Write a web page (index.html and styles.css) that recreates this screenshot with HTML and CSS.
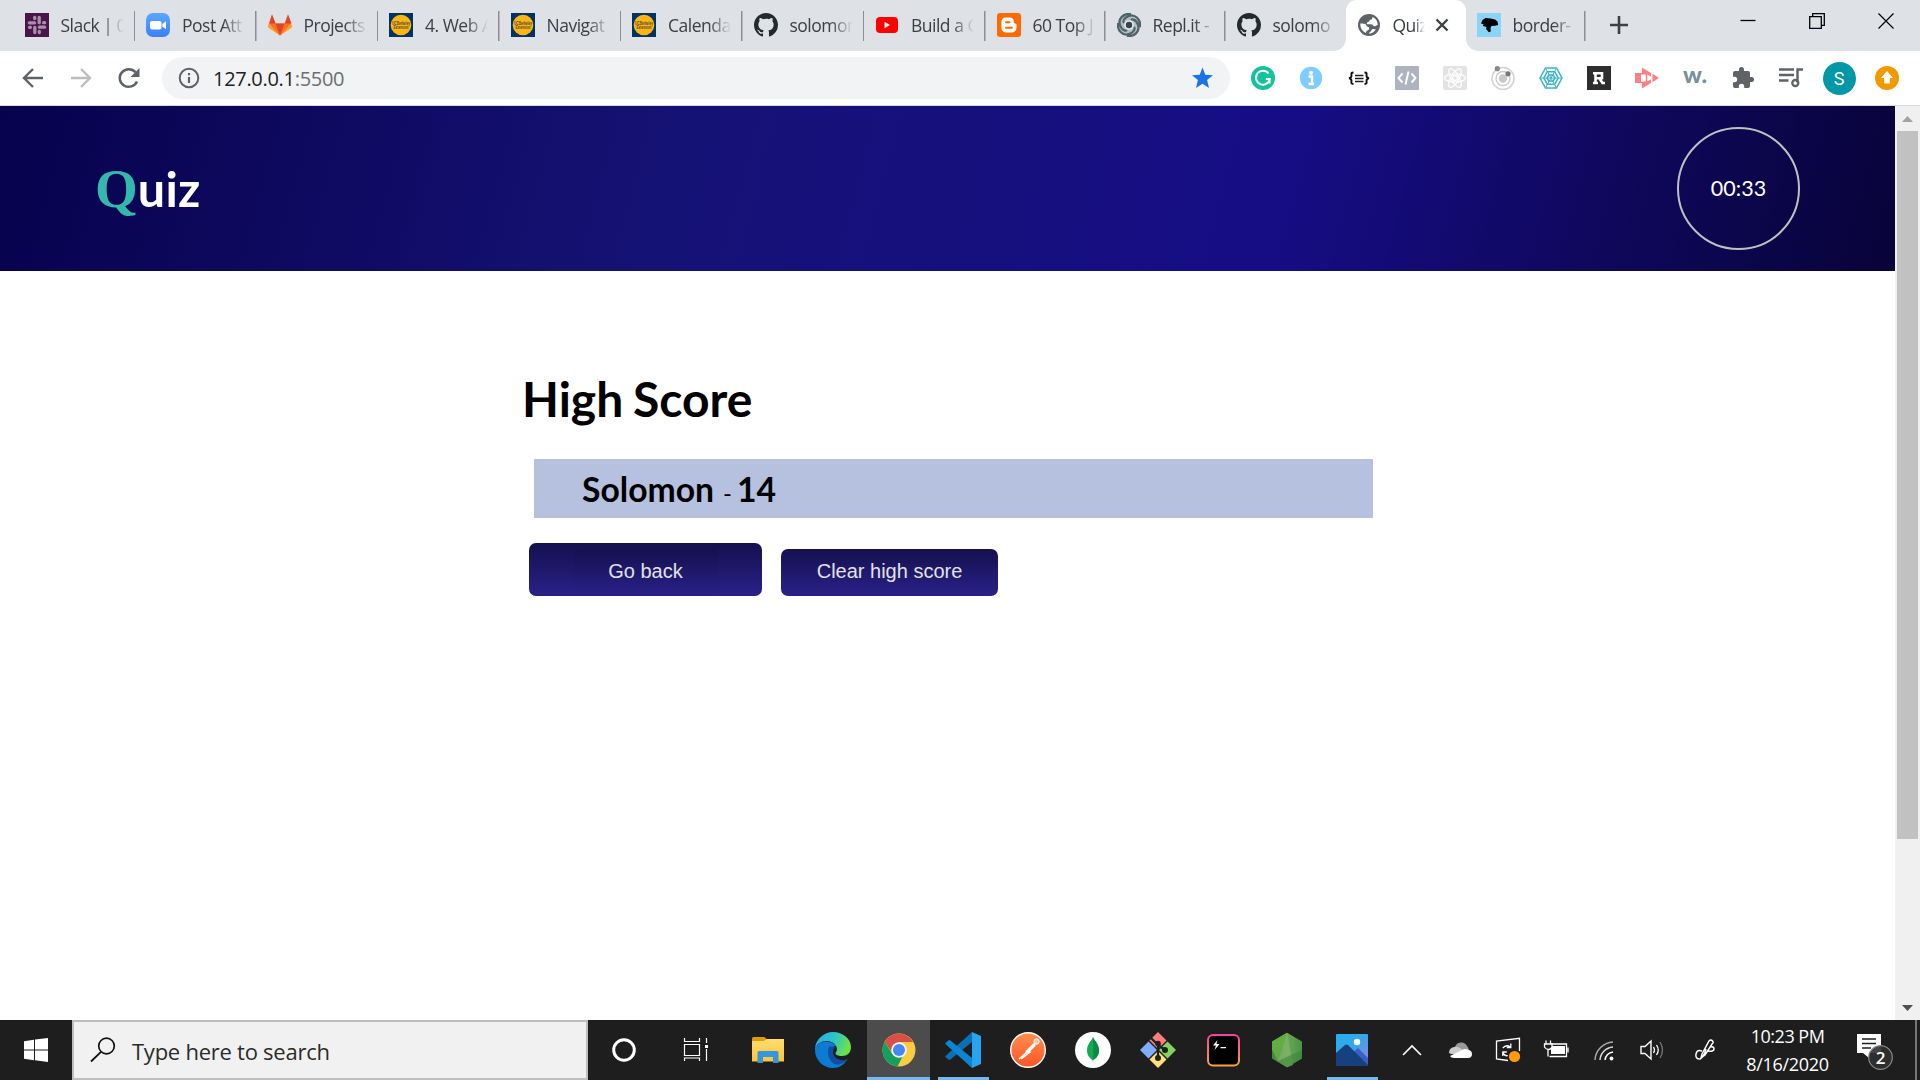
FILE: index.html
```html
<!DOCTYPE html>
<html lang="en">
<head>
<meta charset="utf-8">
<title>Quiz</title>
<link rel="stylesheet" href="styles.css">
</head>
<body>
<svg class="defs" width="0" height="0">
  <defs>
    <symbol id="github" viewBox="0 0 16 16"><path fill="#24292e" d="M8 0C3.58 0 0 3.58 0 8c0 3.54 2.29 6.53 5.47 7.59.4.07.55-.17.55-.38 0-.19-.01-.82-.01-1.49-2.01.37-2.53-.49-2.69-.94-.09-.23-.48-.94-.82-1.13-.28-.15-.68-.52-.01-.53.63-.01 1.08.58 1.23.82.72 1.21 1.87.87 2.33.66.07-.52.28-.87.51-1.07-1.78-.2-3.64-.89-3.64-3.95 0-.87.31-1.59.82-2.15-.08-.2-.36-1.02.08-2.12 0 0 .67-.21 2.2.82A7.6 7.6 0 0 1 8 3.87c.68 0 1.36.09 2 .27 1.53-1.04 2.2-.82 2.2-.82.44 1.1.16 1.92.08 2.12.51.56.82 1.27.82 2.15 0 3.07-1.87 3.75-3.65 3.95.29.25.54.73.54 1.48 0 1.07-.01 1.93-.01 2.2 0 .21.15.46.55.38A8.01 8.01 0 0 0 16 8c0-4.42-3.58-8-8-8z"/></symbol>
    <symbol id="berkeley" viewBox="0 0 24 24"><path fill="#003262" d="M0 0h24v24H0z"/><circle cx="12" cy="12" r="10.3" fill="#fdb515"/><text x="12" y="11.5" text-anchor="middle" font-family="Liberation Sans" font-weight="bold" font-size="4.6" textLength="18" lengthAdjust="spacingAndGlyphs" fill="#4b4a30">UCBerkeley</text><text x="12" y="16" text-anchor="middle" font-family="Liberation Sans" font-weight="bold" font-size="4.6" textLength="15" lengthAdjust="spacingAndGlyphs" fill="#4b4a30">Extension</text></symbol>
    <linearGradient id="gEdge" x1="0" y1="0" x2="1" y2="0.3"><stop offset="0" stop-color="#2aa9e8"/><stop offset=".55" stop-color="#2cc3c9"/><stop offset="1" stop-color="#6be04c"/></linearGradient>
    <linearGradient id="gPost" x1="0" y1="0" x2="0" y2="1"><stop offset="0" stop-color="#ff914d"/><stop offset="1" stop-color="#ff5325"/></linearGradient>
    <linearGradient id="gTerm" x1="0" y1="0" x2="0" y2="1"><stop offset="0" stop-color="#f540a4"/><stop offset="1" stop-color="#fba43a"/></linearGradient>
    <linearGradient id="gNode" x1="0" y1="0" x2="1" y2="0"><stop offset="0" stop-color="#3f873f"/><stop offset=".5" stop-color="#6aa858"/><stop offset="1" stop-color="#4b9345"/></linearGradient>
    <linearGradient id="gPhoto" x1="0" y1="0" x2="1" y2="1"><stop offset="0" stop-color="#25b0ee"/><stop offset=".5" stop-color="#38a5ea"/><stop offset="1" stop-color="#a57be0"/></linearGradient>
    <linearGradient id="gFold" x1="0" y1="0" x2="0" y2="1"><stop offset="0" stop-color="#ffdc73"/><stop offset="1" stop-color="#fbc636"/></linearGradient>
    <linearGradient id="gZoom" x1="0" y1="0" x2="0" y2="1"><stop offset="0" stop-color="#5aa7ff"/><stop offset="1" stop-color="#3a80fb"/></linearGradient>
  </defs>
</svg>

<div class="tabstrip">
  <div class="tab"><svg class="fav" viewBox="0 0 24 24"><path fill="#4a154b" d="M0 0h24v24H0z"/><g stroke="#a98eaa" stroke-width="3.300" stroke-linecap="round"><path d="M9.600 9.800H4.300M14.200 9.700V4.500M14.400 14.200h5.200M9.800 14.400v5.200M9.700 4.500v1M19.600 9.700h-1M14.300 19.500v-1M4.500 14.300h1"/></g></svg><span class="label">Slack | 0</span></div>
  <div class="tab"><svg class="fav" viewBox="0 0 24 24"><rect width="24" height="24" rx="7" fill="url(#gZoom)"/><rect x="4" y="8" width="11.5" height="8.6" rx="2" fill="#fff"/><path fill="#fff" d="M16.300 11l3.700-2.700v8L16.300 13.600z"/></svg><span class="label">Post Att</span></div>
  <div class="tab"><svg class="fav" viewBox="0 0 24 24"><path fill="#fc6d26" d="M0 14L4 1.500l3.500 9h9L20 1.500 24 14 12 22.500z"/><path fill="#e24329" d="M12 22.500L7.500 10.500h9zM4 1.500l3.500 9H1.200zM20 1.500l3.500 9h-6.500z"/><path fill="#fca326" d="M1.200 10.500L0 14l12 8.500zM22.800 10.500L24 14l-12 8.500z"/></svg><span class="label">Projects</span></div>
  <div class="tab"><svg class="fav"><use href="#berkeley"/></svg><span class="label">4. Web A</span></div>
  <div class="tab"><svg class="fav"><use href="#berkeley"/></svg><span class="label">Navigat</span></div>
  <div class="tab"><svg class="fav"><use href="#berkeley"/></svg><span class="label">Calenda</span></div>
  <div class="tab"><svg class="fav"><use href="#github"/></svg><span class="label">solomon</span></div>
  <div class="tab"><svg class="fav" viewBox="0 0 24 24"><rect x="1" y="4" width="22" height="16" rx="4" fill="#f00"/><path fill="#fff" d="M9.500 8.800v6.400L15 12z"/></svg><span class="label">Build a C</span></div>
  <div class="tab narrow"><svg class="fav" viewBox="0 0 24 24"><rect width="24" height="24" rx="3" fill="#ff6a00"/><path fill="#fff" d="M8.500 4.500h4c2.700 0 4.300 1.700 4.300 3.900 0 1.500.3 2 1.500 2.100 1 .1 1.200.5 1.200 1.200v3.100c0 2.600-1.800 4.600-4.400 4.600H8.800c-2.600 0-4.400-2-4.400-4.600V9c0-2.600 1.700-4.500 4.100-4.500z"/><path stroke="#ff6a00" stroke-width="1.900" stroke-linecap="round" d="M9 9.300h3.500M9 14.700h6"/></svg><span class="label">60 Top J</span></div>
  <div class="tab narrow"><svg class="fav" viewBox="0 0 24 24"><circle cx="12" cy="12" r="11.600" fill="#b5bfc3"/><g fill="none" stroke="#4f636a" stroke-width="2.200"><path d="M14 1C6 0 1 6 3 12s6 6 7 5M23 14c1-8-5-13-11-11s-6 6-5 7M10 23c8 1 13-5 11-11s-6-6-7-5M1 10c-1 8 5 13 11 11s6-6 5-7"/></g><circle cx="12" cy="12" r="4.800" fill="#e4e8ea"/><circle cx="12" cy="12" r="3.200" fill="#35434a"/></svg><span class="label">Repl.it -</span></div>
  <div class="tab narrow nosep"><svg class="fav"><use href="#github"/></svg><span class="label">solomo</span></div>
  <div class="tab narrow active"><svg class="globe" viewBox="0 0 22 22"><circle cx="11" cy="11" r="11" fill="#5f6368"/><path fill="#fff" d="M13.500 2.300C11 3 8.200 3.600 8.200 5.800c0 1.500 2.800.7 2.800 2.400 0 1.300-1.800 1.300-1.800 2.800h4.300c1.500 0 1.700 1.300 3 1.300 1 0 1.300-1.300 3-1.300C19.500 6.500 17 3.500 13.500 2.300z" opacity="0"/><path fill="#fff" d="M2.300 9.500c2.500 0 6.200.2 6.200 2.300 0 1.200 2.700.7 2.700 2.600 0 2.300-3.200 1.300-3.200 4.600C4.500 17.500 2 14 2.300 9.500zM14.500 3c3 1.200 5.200 4.200 5.200 8-1.500.2-1.700 1.300-3 1.300-1.700 0-1.500-2-3.700-2H9.800c-1.500 0-1.300-2 .2-2.300 2-.3 1-1.800 2.500-2.200s2-1.300 2-2.800zM11 19.700c0-2 2-1.500 2.500-3.500s3-.5 4.500-1.200c-1.300 2.700-3.800 4.700-7 4.700z"/></svg><span class="label">Quiz</span><svg class="close" viewBox="0 0 14 14"><path d="M1.500 1.500l11 11m0-11l-11 11" stroke="#3c4043" stroke-width="2.400"/></svg></div>
  <div class="tab narrow"><svg class="fav" viewBox="0 0 24 24"><path fill="#8ad4f5" d="M0 0h24v24H0z"/><path d="M4 10.500L5.500 7l3-2 5 .5 4.500 1 2.500 2 .7 3.500-3 .7-3.700.3-1 2 .3 3.500-2 .7-2.800-3.200.5-2L6 13l.5-1.800z"/></svg><span class="label">border-</span></div>
  <svg class="plus" viewBox="0 0 18 18"><path d="M9 0v18M0 9h18" stroke="#3c4043" stroke-width="2.600"/></svg>
  <div class="winctl">
    <svg width="16" height="16" viewBox="0 0 16 16"><path d="M.5 7.500h15" stroke="#000" stroke-width="1.300"/></svg>
    <svg width="16" height="16" viewBox="0 0 16 16"><path d="M.7 3.700h11.600v11.600H.7zM3.700 3.700V.7h11.600v11.600h-3" fill="none" stroke="#000" stroke-width="1.300"/></svg>
    <svg width="16" height="16" viewBox="0 0 16 16"><path d="M.5.5l15 15m0-15l-15 15" stroke="#000" stroke-width="1.200"/></svg>
  </div>
</div>

<div class="toolbar">
  <div class="nav">
    <svg viewBox="0 0 24 24"><path d="M22 12H3.500M12 3L3 12l9 9" fill="none" stroke="#5f6368" stroke-width="2.400"/></svg>
    <svg viewBox="0 0 24 24"><path d="M2 12h18.500M12 3l9 9-9 9" fill="none" stroke="#bbbdbf" stroke-width="2.400"/></svg>
    <svg viewBox="0 0 24 24"><path d="M20 15.500a9 8.800 0 1 1-1.500-9.300" fill="none" stroke="#5f6368" stroke-width="2.500"/><path d="M22.500 2v9h-9z" fill="#5f6368"/></svg>
  </div>
  <div class="omnibox">
    <svg class="info" viewBox="0 0 22 22"><circle cx="11" cy="11" r="9.300" fill="none" stroke="#5f6368" stroke-width="2"/><path d="M11 10v6M11 6v2.200" stroke="#5f6368" stroke-width="2.200"/></svg>
    <span class="url">127.0.0.1<span>:5500</span></span>
    <svg class="star" viewBox="0 0 22 22"><path fill="#1a73e8" d="M11 .5l2.800 7.200 7.700.5-5.900 4.900 1.900 7.900-6.500-4.200L4.500 21l1.900-7.900L.5 8.200l7.700-.5z"/></svg>
  </div>
  <div class="exts">
    <svg viewBox="0 0 24 24"><circle cx="12" cy="12" r="12" fill="#15c39a"/><path d="M17.500 7.500a7 7 0 1 0 1.300 5.500h-4M18.600 13v4.500" fill="none" stroke="#fff" stroke-width="2"/></svg>
    <svg viewBox="0 0 24 24"><circle cx="12" cy="12" r="11.200" fill="#7fcdff"/><circle cx="12" cy="6.800" r="2" fill="#fff"/><path d="M9.500 10.500h3.500V18M9.500 18h5.500" stroke="#fff" stroke-width="2.400" fill="none"/></svg>
    <svg viewBox="0 0 24 24"><path d="M6.500 6.500c-3 0-2 1.500-2 3s-.5 2.500-2.500 2.800c2 .3 2.500 1.300 2.500 2.700s-1 3 2 3M17.500 6.500c3 0 2 1.500 2 3s.5 2.500 2.500 2.800c-2 .3-2.500 1.300-2.500 2.700s1 3-2 3" fill="none" stroke="#111" stroke-width="1.900"/><path d="M8 9.600h8.500M8 12.500h8.500M8 15.400h8.500" stroke="#222" stroke-width="1.500"/></svg>
    <svg viewBox="0 0 24 24"><rect width="24" height="24" rx="1" fill="#adb3bf"/><path d="M7.500 7.500L3.500 12l4 4.500M16.500 7.500l4 4.500-4 4.500M13.500 5.500l-3 13" fill="none" stroke="#fff" stroke-width="1.900"/></svg>
    <svg viewBox="0 0 24 24"><rect width="24" height="24" rx="2" fill="#e3e3e3"/><g fill="none" stroke="#fff" stroke-width="1.200"><ellipse cx="12" cy="12" rx="10.500" ry="4"/><ellipse cx="12" cy="12" rx="10.500" ry="4" transform="rotate(60 12 12)"/><ellipse cx="12" cy="12" rx="10.500" ry="4" transform="rotate(120 12 12)"/><circle cx="12" cy="12" r="2.400"/></g></svg>
    <svg viewBox="0 0 24 24"><circle cx="12" cy="12.500" r="11" fill="none" stroke="#d2d2d2" stroke-width="1.500"/><circle cx="12" cy="12.500" r="7" fill="none" stroke="#c8c8c8" stroke-width="1.300"/><circle cx="12" cy="12.500" r="4.200" fill="#c9c9c9"/><circle cx="6.300" cy="2.700" r="2.600" fill="#888"/><circle cx="17" cy="7.800" r="2.600" fill="#777"/></svg>
    <svg viewBox="0 0 24 24"><g fill="none" stroke="#38b4c8" stroke-width="1.500"><path d="M6.500 2h11L23 12l-5.500 10h-11L1 12z"/><path d="M8.200 5.800h7.600L19.200 12l-3.400 6.200H8.200L4.800 12z"/><path d="M9.800 9h4.400l1.800 3-1.800 3H9.800L8 12z"/><path d="M1 12h22M7 3l10 18M17 3L7 21" stroke-width="1"/></g></svg>
    <svg viewBox="0 0 24 24"><path fill="#2e2e2e" d="M0 0h24v24H0z"/><path d="M8.500 18V7.300H15v5H8.500M12.500 12.500l3.500 5.300M6 7.300h3M6 17h5M14.500 17H18" fill="none" stroke="#fff" stroke-width="2.600"/></svg>
    <svg viewBox="0 0 24 24"><path fill="#ff7f84" d="M0 7h6v10H0zM7 1.500L16 7v3.500L13 9 7 7zM7 22.500L16 17v-3.500L13 15l-6 2zM17.500 7.800L24 12l-6.500 4.200z"/><path fill="none" stroke="#ff7f84" stroke-width="1.500" d="M6 7.800h5.500v8.400H6"/></svg>
    <svg viewBox="0 0 24 24"><text x="0" y="16.500" font-family="Lato" font-weight="900" font-size="22" textLength="24" lengthAdjust="spacingAndGlyphs" fill="#78909c">w.</text></svg>
    <svg viewBox="0 0 24 24"><path fill="#5f6368" d="M20.500 11H19V7a2 2 0 0 0-2-2h-4V3.500a2.500 2.500 0 0 0-5 0V5H4a2 2 0 0 0-2 2v3.800h1.500a2.700 2.700 0 0 1 0 5.400H2V20a2 2 0 0 0 2 2h3.800v-1.500a2.700 2.700 0 0 1 5.400 0V22H17a2 2 0 0 0 2-2v-4h1.500a2.500 2.500 0 0 0 0-5z"/></svg>
    <svg viewBox="0 0 24 24"><path d="M0 3.500h15M0 9h15M0 14.500h9.500M24 3.500h-5.500v13" stroke="#5f6368" stroke-width="2.400" fill="none"/><circle cx="16.300" cy="17" r="3" fill="none" stroke="#5f6368" stroke-width="2.300"/></svg>
    <div class="avatar">S</div>
    <svg viewBox="0 0 24 24"><circle cx="12" cy="12" r="12" fill="#f29900"/><path fill="#fff" d="M12 5l6 7h-3.200v5.500H9.200V12H6z"/></svg>
  </div>
</div>

<div class="viewport">
  <div class="page">
    <header class="header">
      <h1 class="logo"><span>Q</span>uiz</h1>
      <div class="timer">00:33</div>
    </header>
    <main class="scores">
      <h2>High Score</h2>
      <div class="entry"><b>Solomon</b><i>-</i><b>14</b></div>
      <div class="actions">
        <div class="back"><button>Go back</button></div>
        <button class="clear">Clear high score</button>
      </div>
    </main>
  </div>
  <div class="scrollbar">
    <svg width="11" height="6" viewBox="0 0 11 6"><path d="M0 6L5.500 0 11 6z" fill="#a3a3a3"/></svg>
    <div class="thumb"></div>
    <svg width="11" height="6" viewBox="0 0 11 6"><path d="M0 0l5.500 6L11 0z" fill="#505050"/></svg>
  </div>
</div>

<div class="taskbar">
  <div class="start"><svg width="24" height="24" viewBox="0 0 24 24"><path fill="#fff" d="M0 3.200L10 1.800v9.600H0zM11 1.600L24 0v11.400H11zM0 12.400h10v9.800L0 20.800zM11 12.400h13V24l-13-1.700z"/></svg></div>
  <div class="search"><svg width="26" height="26" viewBox="0 0 26 26"><circle cx="16.500" cy="9" r="7.800" fill="none" stroke="#111" stroke-width="1.700"/><path d="M11 14.800L1 24.500" stroke="#111" stroke-width="1.800"/></svg><span>Type here to search</span></div>
  <div class="apps">
    <div class="app wide"><svg viewBox="0 0 36 36"><circle cx="18" cy="18" r="10.300" fill="none" stroke="#fff" stroke-width="3"/></svg></div>
    <div class="app wide"><svg viewBox="0 0 36 36"><path d="M6.500 6v3.500h15V6M6.500 12.500h15v11h-15zM6.500 29v-3h15v3M28.500 6v5M28.500 17v12" fill="none" stroke="#fff" stroke-width="1.200"/><path fill="#fff" d="M27 13h3v3h-3z"/></svg></div>
    <div class="app wide"><svg viewBox="0 0 36 36"><path fill="#e09c00" d="M2 6.500q0-1.500 1.500-1.500h11l2 2v4H2z"/><path fill="url(#gFold)" d="M2 9h12l2.500-2H34v22.500H2z"/><path fill="#3595de" d="M7.500 31V20.500q0-1.500 1.500-1.500h18q1.500 0 1.500 1.500V31H23v-6H13v6z"/></svg></div>
    <div class="app edge"><svg viewBox="0 0 36 36"><path fill="#0c7bd4" d="M0 16C2 8 18 8 21 14c-4 0-7 4-6.500 8 .5 6 7 9 12 8 2-.5 4-1.500 6-3C29 33 24 36 18 36 8 36 0 28 0 18z"/><path fill="#104f9f" d="M14.500 14.500c-3 5-1.500 14 5 17.500 5 2 10-1.500 13.500-5-7 3-12 0-14-3.500-1.500-3-1.200-6 1-8.500z"/><path fill="url(#gEdge)" d="M0 16C1 7 9 0 18 0c10 0 18 7 18 15 0 6-4 9-9 9-4 0-6.500-1.300-6.500-2.700 0-1 1.500-1.500 1.500-4 0-4.500-4.500-8.300-10-8.300C6 9 1.500 12 0 16z"/></svg></div>
    <div class="app current"><svg viewBox="0 0 36 36"><circle cx="18" cy="18" r="16.500" fill="#f9cc46"/><path fill="#d94f43" d="M3.700 9.800A16.500 16.500 0 0 1 32.300 10H18l-7.500 10z"/><path fill="#12a05c" d="M3.700 9.800L11.300 22l10 3-4.800 9.400A16.500 16.500 0 0 1 3.700 9.800z"/><circle cx="18" cy="18" r="7.800" fill="#f4f4f4"/><circle cx="18" cy="18" r="6" fill="#4688f1"/></svg></div>
    <div class="app open"><svg viewBox="0 0 36 36"><path fill="#0b6fb5" d="M27 0v10L5.400 27.500q-1 .8-2 0L1 25.500q-1.200-1 0-2z"/><path fill="#0b86d3" d="M27 36L1 12.500q-1.200-1 0-2L3.400 8.500q1-.8 2 0L27 26z"/><path fill="#27a3f0" d="M27 0l9 4v28l-9 4z"/></svg></div>
    <div class="app"><svg viewBox="0 0 36 36"><circle cx="18" cy="18" r="17.300" fill="url(#gPost)" stroke="#fff" stroke-width="1.400"/><path fill="none" stroke="#fff" stroke-width="3.200" stroke-linecap="round" d="M17 20l7-7"/><path d="M9 27l11-9.500M16 19l4 1-9 7" stroke="#fff" stroke-width="1.500" fill="none"/><circle cx="26.500" cy="9.500" r="2.700" fill="#ffc2a5" stroke="#fff"/></svg></div>
    <div class="app"><svg viewBox="0 0 36 36"><circle cx="18" cy="18" r="18" fill="#fff"/><path fill="#13aa52" d="M18 5c1.500 4 6 7 6 13.500 0 5-3 8-5.700 9.500L18 31l-.5-3c-3-2-5.500-5-5.500-9.500C12 12 16.500 9 18 5z"/><path fill="#0f8a45" d="M18 5c1.500 4 6 7 6 13.500 0 5-3 8-5.700 9.500z"/></svg></div>
    <div class="app"><svg viewBox="0 0 36 36"><path fill="#ff7d7d" d="M18 0l8.500 8.500L18 17 9.500 8.500z"/><path fill="#7faeff" d="M8.500 9.500L17 18l-8.500 8.500L0 18z"/><path fill="#83d45d" d="M27.500 9.500L36 18l-8.500 8.500L19 18z"/><path fill="#ffe07a" d="M18 19l8.500 8.500L18 36l-8.500-8.500z"/><path d="M11 6l7 7v13M18 13l7 5" stroke="#1f1f1f" stroke-width="2.300" fill="none"/><circle cx="18" cy="11.500" r="2.800" fill="#1f1f1f"/><circle cx="25" cy="18" r="3" fill="#1f1f1f"/><circle cx="18" cy="26" r="3" fill="#1f1f1f"/></svg></div>
    <div class="app"><svg viewBox="0 0 36 36"><rect x="3" y="3" width="31" height="30.500" rx="5" fill="#000" stroke="url(#gTerm)" stroke-width="2"/><path fill="#fff" d="M12.500 8L8 13.500h3L9.500 18l5-6h-3zM15.500 15h5.500v1.200h-5.500z"/></svg></div>
    <div class="app"><svg viewBox="0 0 36 36"><path fill="url(#gNode)" d="M18 .8l15 8.700v17L18 35.200 3 26.500v-17z"/><path fill="#5fae3f" d="M18 .8L3 9.500v8L9 29z"/><path fill="#83b36d" opacity=".7" d="M18 .8L9 29l9 6.200L24 33z"/><path fill="#3d843b" opacity=".6" d="M3 26.500L9 29l24-11v8.500L18 35.200z"/></svg></div>
    <div class="app open"><svg viewBox="0 0 36 36"><rect x="2" y="2" width="32" height="32" rx="1" fill="url(#gPhoto)"/><path fill="#3d5fc4" d="M16 23l8-7 10 10v8H16z"/><path fill="#15417f" d="M2 21l9-8q1.500-1 3 0l20 20v1H2z"/><circle cx="23" cy="10" r="3.200" fill="#fff"/></svg></div>
  </div>
  <div class="tray">
    <svg viewBox="0 0 26 26"><path d="M4 18l9-9 9 9" fill="none" stroke="#fff" stroke-width="1.600"/></svg>
    <svg viewBox="0 0 26 26"><path fill="#999" d="M8 10a6.500 6.500 0 0 1 12-1q2 2 2 5l-8 1z"/><path fill="#ccc" d="M2 16q0-5 5-6 3-1 6 1l9 6H4z"/><path fill="#fff" d="M3 19l12-6q3-2 7 0 3 1 3 4 0 4-4 4H7q-3 0-4-2z"/></svg>
    <svg viewBox="0 0 26 26"><path d="M13 23.500L1.500 22V4L24.500 1.300V14" fill="none" stroke="#fff" stroke-width="1.300"/><path d="M7.800 11q3.500-4 7.500-1m.5-3.500v4h-4M7.800 19v-4h4m-4 1q2.500 3.500 5 2.500" fill="none" stroke="#fff" stroke-width="1.300"/><circle cx="19.500" cy="19.500" r="5.600" fill="#ff9a08"/></svg>
    <svg viewBox="0 0 26 26"><path fill="#fff" d="M8 9h14v8H8z"/><path d="M8 7h15.500v12.500H6.500M25 10.500v5M5 12v7.500M3 3.500V7M7.500 3.500V7" fill="none" stroke="#fff" stroke-width="1.300"/><path d="M1.500 7h7.500v3q-1 2.500-3.500 2.500T1.500 10z" fill="#1e1e1e" stroke="#fff" stroke-width="1.300"/></svg>
    <svg viewBox="0 0 26 26"><g fill="none" stroke="#aaa" stroke-width="1.500"><path d="M4 23A19 19 0 0 1 22 5"/><path d="M9 23A14 14 0 0 1 22 10" stroke="#ddd"/><path d="M14 23a9 9 0 0 1 8-8" stroke="#fff"/></g><circle cx="20.500" cy="21.500" r="1.900" fill="#fff"/></svg>
    <svg viewBox="0 0 26 26"><path d="M2 9.500h4l6-5.500v18l-6-5.500H2z" fill="none" stroke="#fff" stroke-width="1.400"/><path d="M14.500 10q2 3 0 6M17.500 8q3.500 5 0 10" fill="none" stroke="#fff" stroke-width="1.300"/><path d="M21 5q5 8 0 16" fill="none" stroke="#777" stroke-width="1.300"/></svg>
    <svg class="pen" viewBox="0 0 26 26"><path d="M9 14q-5-2-6 3t4 5q4-2 6-10M9 17L16 4q2-2 3.500 0t-.5 3L12 18l-4 3zM17 10q4-1 4 2t-7 2" fill="none" stroke="#fff" stroke-width="1.500"/></svg>
    <div class="clock"><span>10:23 PM</span><span class="date">8/16/2020</span></div>
    <div class="notify"><svg viewBox="0 0 36 36"><path fill="#fff" d="M0 0h24v19H12v5l-6-5H0z"/><path d="M5 5h14M5 9.500h14M5 14h9" stroke="#1e1e1e" stroke-width="1.300"/><circle cx="23.500" cy="23.500" r="11.800" fill="#303030" fill-opacity=".9" stroke="#8a8a8a" stroke-width="1.200"/></svg><span>2</span></div>
    <div class="peek"></div>
  </div>
</div>
</body>
</html>
```
FILE: styles.css
```css
* { box-sizing: border-box; }
body { margin: 0; width: 1920px; height: 1080px; overflow: hidden; background: #fff; font-family: "Open Sans", "Noto Sans", sans-serif; display: flex; flex-direction: column; }
svg { display: block; flex: none; }
.defs { position: absolute; }

.tabstrip { height: 51px; flex: none; background: #dee1e6; display: flex; padding-left: 13.5px; }
.tab { width: 121.5px; flex: none; height: 51px; padding: 0 0 1px 11px; display: flex; align-items: center; background: linear-gradient(#8b8e93, #8b8e93) right 11px / 1.5px 30px no-repeat; }
.tab.narrow { width: 120px; }
.tab.nosep { background: none; }
.fav { width: 24px; height: 24px; }
.label { width: 63px; margin-left: 12px; font-size: 17.5px; line-height: 26px; letter-spacing: -.5px; color: #3c4043; white-space: nowrap; overflow: hidden; -webkit-mask-image: linear-gradient(90deg, #000 65%, transparent); mask-image: linear-gradient(90deg, #000 65%, transparent); }
.tab.active { position: relative; background: #fff; border-radius: 11px 11px 0 0; padding-left: 12px; }
.tab.active::before, .tab.active::after { content: ""; position: absolute; bottom: 0; width: 12px; height: 12px; }
.tab.active::before { left: -12px; background: radial-gradient(circle at 0 0, transparent 11.5px, #fff 12px); }
.tab.active::after { right: -12px; background: radial-gradient(circle at 100% 0, transparent 11.5px, #fff 12px); }
.globe { width: 22px; height: 22px; }
.active .label { width: 32px; margin-left: 13px; letter-spacing: -.7px; }
.close { width: 14px; height: 14px; margin-left: 10px; }
.plus { width: 18px; height: 18px; margin: 16px 0 0 24px; }
.winctl { display: flex; gap: 53px; margin: 13px 0 0 auto; padding-right: 26px; }

.toolbar { height: 55px; flex: none; display: flex; align-items: center; border-bottom: 1px solid #d8dadc; padding-left: 21px; }
.nav { display: flex; gap: 24px; width: 141px; }
.nav svg { width: 24px; height: 24px; }
.omnibox { width: 1068px; height: 42px; border-radius: 21px; background: #f1f3f4; display: flex; align-items: center; padding: 0 16px; }
.info { width: 22px; height: 22px; }
.url { margin-left: 13px; padding-top: 1px; font-size: 20px; line-height: 28px; letter-spacing: -.3px; color: #202124; }
.url span { color: #6b6f73; }
.star { width: 23px; height: 22px; margin-left: auto; }
.exts { display: flex; align-items: center; margin-left: 21px; gap: 24px; }
.exts svg { width: 24px; height: 24px; }
.avatar { width: 33px; height: 33px; margin: 0 -4.5px; border-radius: 50%; background: #0097a7; color: #fff; font: 18px/33px Roboto, sans-serif; text-align: center; }

.viewport { flex: 1; display: flex; min-height: 0; }
.page { width: 1895px; }
.header { height: 165px; padding: 0 95px; display: flex; justify-content: space-between; align-items: center; background: linear-gradient(105deg, #07024c 0%, #151275 35%, #160d85 67%, #080338 100%); color: #fff; font-family: Lato, sans-serif; }
.logo { margin: 0; font-size: 48.5px; line-height: 60px; font-weight: 700; letter-spacing: .3px; }
.logo span { font-family: "Liberation Serif", serif; font-size: 55px; letter-spacing: 0; color: #34b8ac; }
.timer { width: 123px; height: 123px; border: 2px solid #c0c0c0; border-radius: 50%; font-size: 21.5px; line-height: 119px; text-align: center; }
.scores { padding: 97px 0 0 522px; font-family: Lato, sans-serif; color: #000; }
.scores h2 { margin: 0; font-size: 48px; line-height: 62px; font-weight: 700; word-spacing: -2px; }
.entry { width: 839px; height: 59px; margin: 29px 0 0 12px; padding-left: 48px; background: #b6c1e0; display: flex; align-items: baseline; line-height: 60px; font-size: 33.7px; }
.entry i { font-style: normal; font-size: 24px; margin: 0 5px 0 9px; }
.actions { display: flex; align-items: flex-end; gap: 19px; margin: 25px 0 0 7px; }
.actions button { border: 0; padding: 0 0 2px; color: #e2e2e6; font: 20px/45px "Liberation Sans", Arial, sans-serif; height: 47px; border-radius: 7px; background: linear-gradient(#15104f, #292189); }
.back { width: 233px; height: 53px; padding-top: 6px; border-radius: 7px; background: linear-gradient(#15104f, #292189); display: flex; justify-content: center; }
.back button { width: 146px; }
.clear { width: 217px; }

.scrollbar { width: 25px; background: #f0f0f0; display: flex; flex-direction: column; align-items: center; padding: 10px 0 9px; }
.thumb { width: 21px; height: 708px; margin: 9px 0 auto; background: #c1c1c1; }

.taskbar { height: 60px; flex: none; background: #1e1e1e; display: flex; color: #fff; }
.start { width: 72px; flex: none; display: flex; align-items: center; justify-content: center; }
.search { width: 516px; flex: none; border: 2px solid #bebebe; background: #f1f1f1; display: flex; align-items: center; padding-left: 16px; color: #2b2b2b; font-size: 22px; letter-spacing: -.25px; }
.search span { margin: 2px 0 0 16px; }
.apps { display: flex; flex: none; }
.app { width: 64.8px; flex: none; display: flex; align-items: center; justify-content: center; }
.app.wide { width: 72px; }
.app.edge { width: 62px; padding-right: 4px; }
.app svg { width: 36px; height: 36px; }
.app.current { width: 63px; background: #4c4c4c; box-shadow: inset 0 -3px #76b9ed; margin: 0 1px; }
.open { background: linear-gradient(#76b9ed, #76b9ed) center bottom / 51px 3px no-repeat; }
.tray { flex: 1; display: flex; align-items: center; padding-left: 14px; gap: 22px; }
.tray > svg { width: 26px; height: 26px; }
.tray .pen { margin-left: 6px; }
.clock { width: 94px; flex: none; display: flex; flex-direction: column; align-items: center; font-size: 18px; line-height: 28px; letter-spacing: -.5px; }
.clock .date { letter-spacing: -.3px; }
.notify { position: relative; flex: none; width: 36px; height: 36px; margin-top: 4px; }
.notify svg { width: 36px; height: 36px; }
.notify span { position: absolute; left: 12px; top: 12px; width: 24px; text-align: center; font-size: 17px; line-height: 24px; font-weight: 600; }
.peek { width: 2px; flex: none; height: 60px; margin: 0 6px 0 auto; background: #777; }
```
